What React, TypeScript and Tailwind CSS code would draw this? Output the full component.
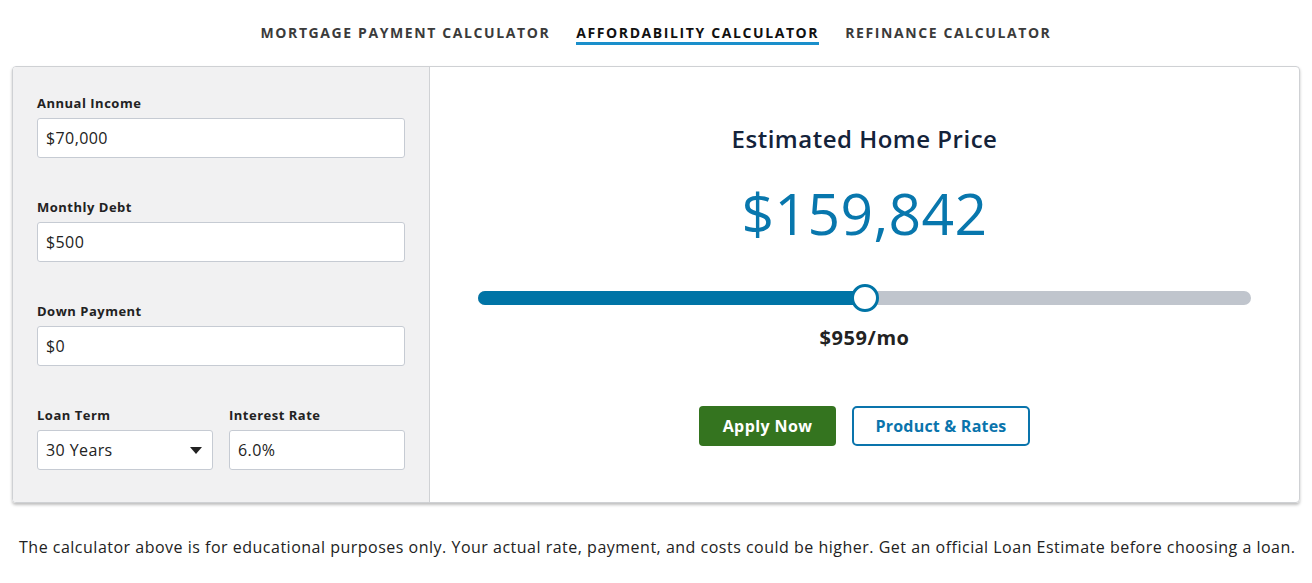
import React from "react";

const font = { fontFamily: "'Open Sans', 'Noto Sans', Arial, sans-serif" };

function Field({ label, value, className = "" }: { label: string; value: string; className?: string }) {
  return (
    <div className={className}>
      <div className="text-[13px] font-bold text-[#222] leading-4 mb-[7px] tracking-[0.5px]">{label}</div>
      <div className="h-10 bg-white border border-[#c6cbd3] rounded-[3px] flex items-center px-2 text-[16px] text-[#222] tracking-[0.4px]">
        {value}
      </div>
    </div>
  );
}

export default function App() {
  return (
    <div className="w-[1312px] h-[583px] bg-white overflow-hidden" style={font}>
      <div className="flex justify-center gap-[26px] pt-[24px] h-[66px]">
        <div className="text-[14px] font-bold tracking-[1.6px] text-[#3b3b3b] leading-[18px]">MORTGAGE PAYMENT CALCULATOR</div>
        <div className="text-[14px] font-bold tracking-[1.6px] text-[#111] leading-[18px]">
          <div>AFFORDABILITY CALCULATOR</div>
          <div className="h-[3px] bg-[#1a8fcb]" />
        </div>
        <div className="text-[14px] font-bold tracking-[1.6px] text-[#3b3b3b] leading-[18px]">REFINANCE CALCULATOR</div>
      </div>
      <div className="mx-3 h-[437px] border border-[#cfd1d4] rounded-[4px] flex shadow-[0_2px_3px_rgba(0,0,0,0.25)] overflow-hidden">
        <div className="w-[417px] bg-[#f1f1f2] border-r border-[#d0d2d5] pl-6 pr-6 pt-[28px] flex flex-col gap-[41px]">
          <Field label="Annual Income" value="$70,000" />
          <Field label="Monthly Debt" value="$500" />
          <Field label="Down Payment" value="$0" />
          <div className="flex gap-4">
            <div className="w-[176px]">
              <div className="text-[13px] font-bold text-[#222] leading-4 mb-[7px] tracking-[0.5px]">Loan Term</div>
              <div className="h-10 bg-white border border-[#c6cbd3] rounded-[3px] flex items-center justify-between pl-2 pr-[10px] text-[16px] text-[#222] tracking-[0.4px]">
                <span>30 Years</span>
                <svg width="12" height="7" viewBox="0 0 12 7"><path d="M0 0h12L6 7z" fill="#222" /></svg>
              </div>
            </div>
            <Field label="Interest Rate" value="6.0%" className="flex-1" />
          </div>
        </div>
        <div className="flex-1 flex flex-col items-center pt-[56px]">
          <div className="text-[24px] font-semibold text-[#14233a] leading-8 tracking-[0.5px]">Estimated Home Price</div>
          <div className="text-[57px] text-[#0877ad] leading-[64px] mt-[26px] tracking-[0.4px]">$159,842</div>
          <div className="relative w-[773px] h-[14px] mt-[46px] rounded-full bg-[#c0c5cd]">
            <div className="absolute left-0 top-0 h-full w-[387px] rounded-full bg-[#0074a6]" />
            <div className="absolute left-[373px] top-[-7px] w-[28px] h-[28px] rounded-full bg-white border-[3px] border-[#0074a6]" />
          </div>
          <div className="text-[20px] font-bold text-[#222] mt-[21px] leading-6 tracking-[0.6px]">$959/mo</div>
          <div className="flex gap-4 mt-[56px]">
            <div className="w-[137px] h-10 rounded-[4px] bg-[#34741f] text-white font-bold text-[16px] tracking-[0.4px] flex items-center justify-center">Apply Now</div>
            <div className="w-[178px] h-10 rounded-[5px] border-2 border-[#0a74ac] text-[#0a74ac] font-bold text-[16px] tracking-[0.2px] flex items-center justify-center">Product &amp; Rates</div>
          </div>
        </div>
      </div>
      <div className="pl-[19px] mt-[34px] text-[16px] text-[#222] leading-5 tracking-[0.5px]">
        The calculator above is for educational purposes only. Your actual rate, payment, and costs could be higher. Get an official Loan Estimate before choosing a loan.
      </div>
    </div>
  );
}
